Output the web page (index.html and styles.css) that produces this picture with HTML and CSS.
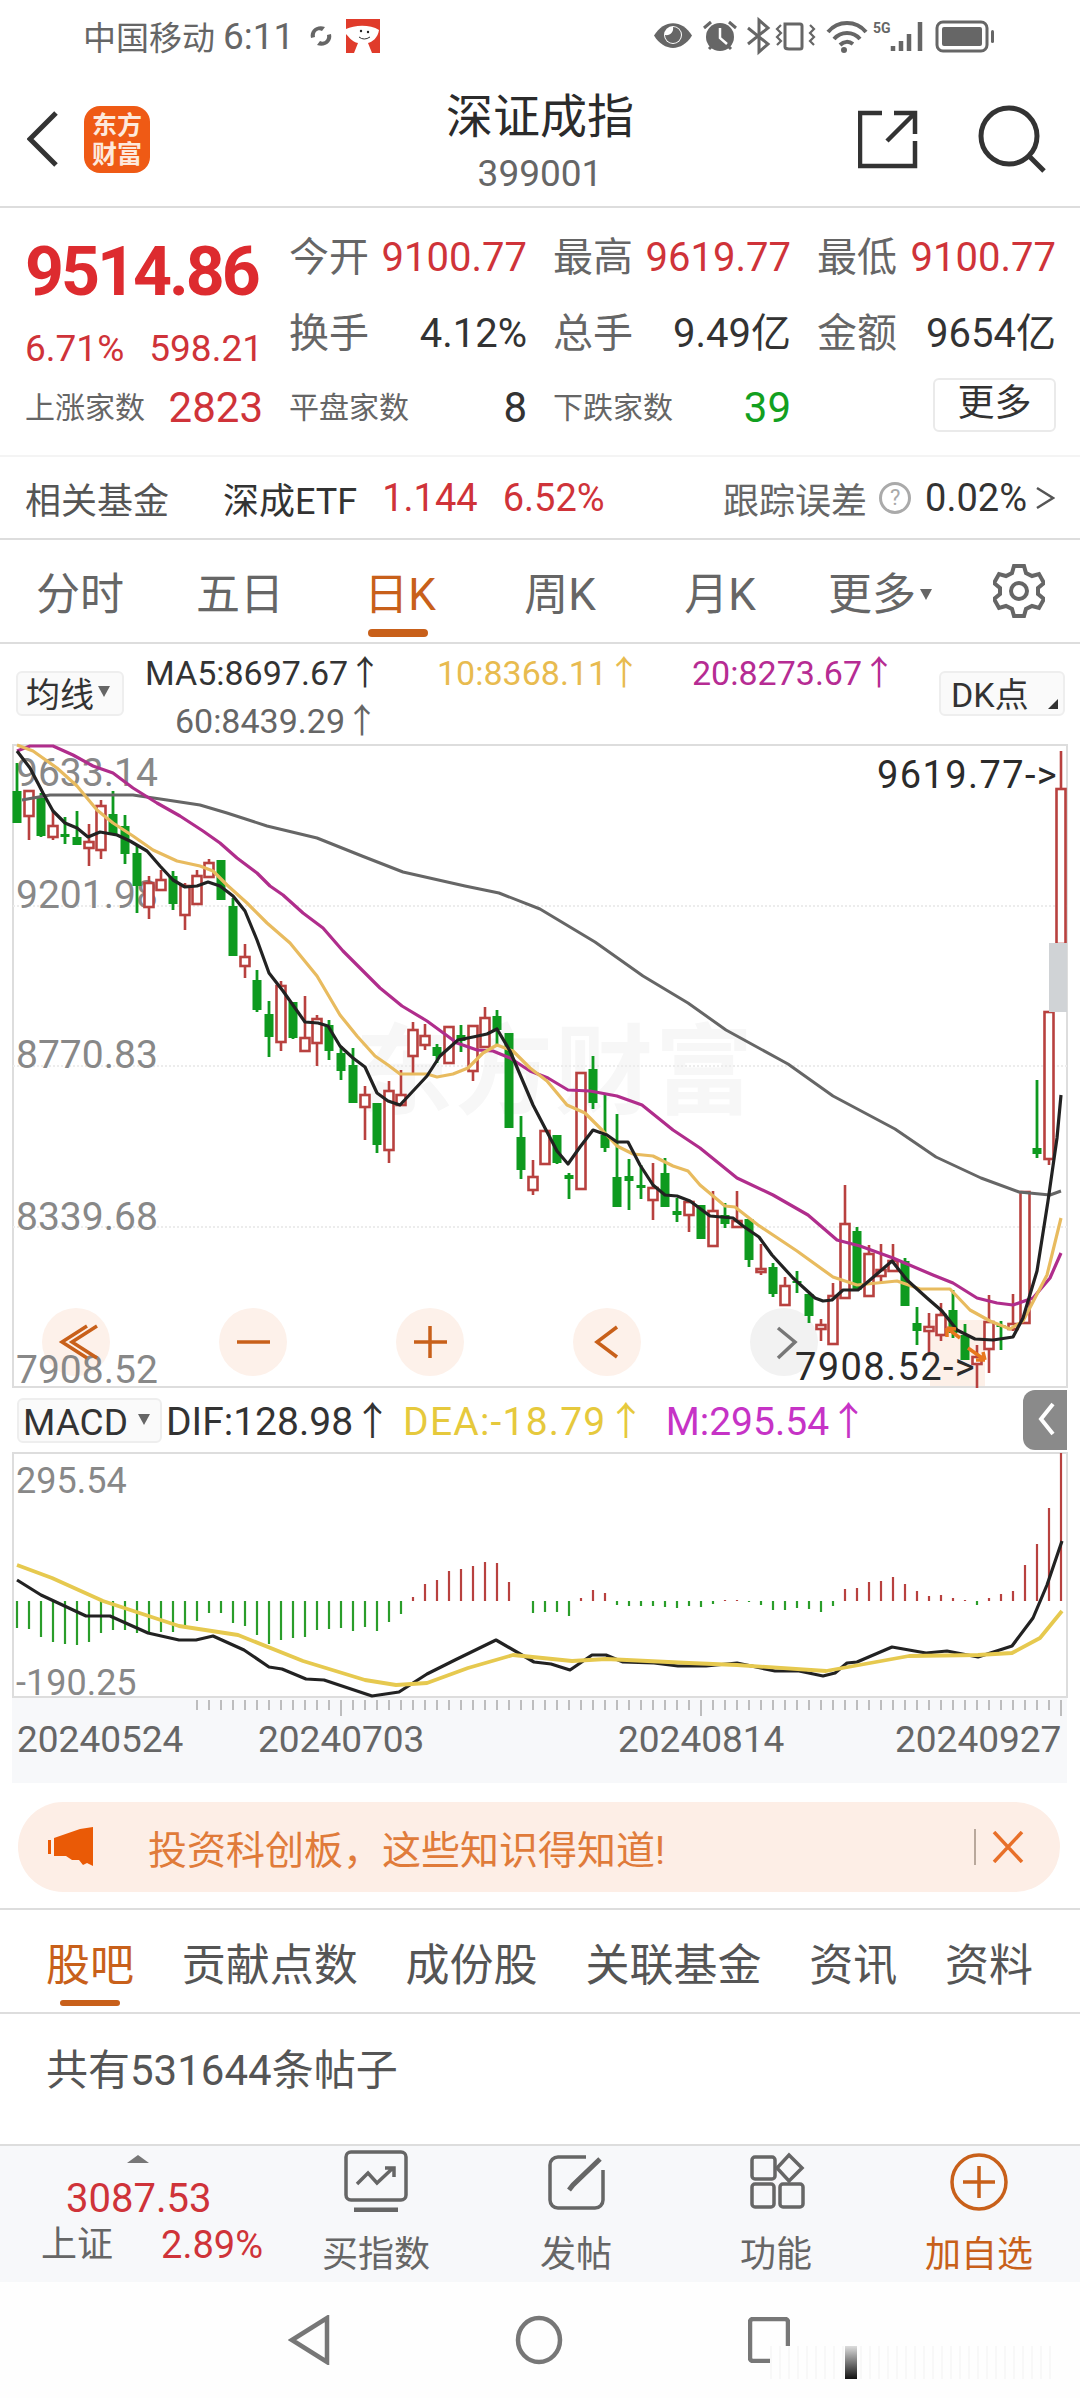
FILE: index.html
```html
<!DOCTYPE html>
<html lang="zh-CN">
  <head>
    <meta charset="UTF-8" />
    <meta name="viewport" content="width=device-width, initial-scale=1.0" />
    <title>深证成指</title>
    <link rel="stylesheet" href="styles.css">
  </head>
  <body>
    <!-- Phone status bar -->
    <div class="status">
      <span class="carrier">中国移动</span>
      <span class="clock">6:11</span>
      <svg class="loop-icon" viewBox="0 0 26 24">
        <path d="M3 14 C1 6 9 0 17 3 L14 7 C10 5 6 8 7 13 Z"/>
        <path d="M23 10 C25 18 17 24 9 21 L12 17 C16 19 20 16 19 11 Z"/>
      </svg>
      <svg class="dog-icon" viewBox="0 0 34 34">
        <rect width="34" height="34" fill="#e03b2b"/>
        <path d="M0 10 C8 6 24 5 33 11 C32 19 26 23 22 24 L26 34 H8 L12 24 C6 23 2 17 0 15 Z" fill="#fff"/>
        <circle cx="15" cy="12" r="1.2" fill="#222"/>
        <circle cx="22" cy="13" r="1.2" fill="#222"/>
        <path d="M13 18 Q18 22 24 18" stroke="#333" stroke-width="1" fill="none"/>
      </svg>
      <svg class="sys-icons" viewBox="655 15 345 42">
        <path class="si-fill" d="M658 35.5 C668 19 686 19 696 35.5 C686 52 668 52 658 35.5 Z"/>
        <circle cx="677" cy="35" r="9" fill="#fff"/>
        <path class="si-fill" d="M677 27 A8 8 0 1 1 669 35 C674 36 678 32 677 27 Z"/>
        <circle class="si-fill" cx="724" cy="37" r="14"/>
        <path d="M724 28 V38 L731 44" stroke="#fff" stroke-width="2.5" fill="none"/>
        <path class="si-line" d="M708 28 L715 22 M740 28 L733 22 M713 49 L716 46 M735 49 L732 46"/>
        <path class="si-line" d="M752 28 L772 44 L763 52 V20 L772 28 L752 44"/>
        <path class="si-line" d="M789 24 H804 A2 2 0 0 1 806 26 V47 A2 2 0 0 1 804 49 H793 A4 2 0 0 1 789 47 Z"/>
        <path class="si-thin" d="M785 25 L781 29 L785 33 L781 37 L785 41 L781 45 M814 25 L818 29 L814 33 L818 37 L814 41 L818 45"/>
        <path class="si-wide" d="M832 32 C842 20 860 20 870 32 M838 39 C845 31 857 31 864 39 M844 45 C848 41 853 41 857 44"/>
        <circle class="si-fill" cx="848" cy="50" r="3"/>
        <text class="si-5g" x="877" y="33">5G</text>
        <path class="si-bars" d="M897 46 V51 M905 41 V51 M913 34 V51 M924 22 V51"/>
        <rect class="si-line" x="941" y="22" width="50" height="29" rx="6"/>
        <rect class="si-fill" x="946" y="27" width="40" height="19" rx="2"/>
        <rect class="si-fill" x="995" y="30" width="3" height="13" rx="1.5"/>
      </svg>
    </div>

    <!-- Title bar -->
    <div class="topbar">
      <div class="topbar-left">
        <svg class="back-icon" viewBox="0 0 32 56"><path d="M29 2 L3 28 L29 54"/></svg>
        <div class="logo">东方<br>财富</div>
      </div>
      <div class="title-box">
        <div class="title">深证成指</div>
        <div class="code">399001</div>
      </div>
      <div class="topbar-right">
        <svg class="share-icon" viewBox="0 0 60 60">
          <path d="M24 4 H2 V57 H57 V32 M57 25 V4 H36 M56 5 L29 32"/>
        </svg>
        <svg class="search-icon" viewBox="0 0 68 68">
          <circle cx="31" cy="31" r="28"/>
          <path d="M51 51 L66 66"/>
        </svg>
      </div>
    </div>

    <!-- Quote block -->
    <div class="quote">
      <div class="price">9514.86</div>
      <div class="cell"><span class="lbl">今开</span><span class="up">9100.77</span></div>
      <div class="cell"><span class="lbl">最高</span><span class="up">9619.77</span></div>
      <div class="cell"><span class="lbl">最低</span><span class="up">9100.77</span></div>

      <div class="change"><span>6.71%</span><span>598.21</span></div>
      <div class="cell"><span class="lbl">换手</span><span class="dark">4.12%</span></div>
      <div class="cell"><span class="lbl">总手</span><span class="dark">9.49亿</span></div>
      <div class="cell"><span class="lbl">金额</span><span class="dark">9654亿</span></div>

      <div class="cell small"><span class="lbl">上涨家数</span><span class="up">2823</span></div>
      <div class="cell small"><span class="lbl">平盘家数</span><span class="dark">8</span></div>
      <div class="cell small"><span class="lbl">下跌家数</span><span class="down">39</span></div>
      <div class="more-wrap"><span class="more-btn">更多</span></div>
    </div>

    <div class="funds">
      <span class="fund-name">相关基金</span>
      <span class="fund-etf">深成ETF</span>
      <span class="fund-val">1.144</span>
      <span class="fund-val">6.52%</span>
      <span class="track">跟踪误差</span>
      <span class="help">?</span>
      <span class="track-val">0.02%</span>
      <svg class="track-arrow" viewBox="0 0 20 24"><path d="M2 2 L18 12 L2 22"/></svg>
    </div>

    <!-- Period tabs -->
    <div class="period-tabs">
      <span class="period">分时</span>
      <span class="period">五日</span>
      <span class="period active">日K</span>
      <span class="period">周K</span>
      <span class="period">月K</span>
      <span class="period">更多<i class="caret"></i></span>
      <svg class="gear" viewBox="0 0 52 54">
        <path d="M21 2 H31 L33 9 L39 12 L46 10 L51 19 L45 24 V30 L51 35 L46 44 L39 42 L33 45 L31 52 H21 L19 45 L13 42 L6 44 L1 35 L7 30 V24 L1 19 L6 10 L13 12 L19 9 Z"/>
        <circle cx="26" cy="27" r="8"/>
      </svg>
    </div>

    <!-- Moving average legend -->
    <div class="ma-row">
      <span class="chip ma-chip">均线<i class="caret"></i></span>
      <div class="ma-legend">
        <span class="ma5">MA5:8697.67↑</span>
        <span class="ma10">10:8368.11↑</span>
        <span class="ma20">20:8273.67↑</span>
        <span class="ma60">60:8439.29↑</span>
      </div>
      <span class="chip dk-chip">DK点<i class="corner"></i></span>
    </div>

    <!-- K line chart, drawn on page coordinates -->
    <svg class="kchart" viewBox="0 746 1080 644">
      <rect class="frame" x="13" y="747" width="1054" height="642"/>
      <text class="wm-text" x="355" y="1108">东方财富</text>
      <path class="grid" d="M13 908 H1067 M13 1068 H1067 M13 1229 H1067"/>
      <rect class="tint" x="930" y="1322" width="55" height="66"/>

      <circle class="pad" cx="76" cy="1344" r="34"/>
      <circle class="pad" cx="253" cy="1344" r="34"/>
      <circle class="pad" cx="430" cy="1344" r="34"/>
      <circle class="pad" cx="607" cy="1344" r="34"/>
      <circle class="pad-off" cx="784" cy="1344" r="34"/>

      <text class="axis" x="16" y="788">9633.14</text>
      <text class="axis" x="16" y="910">9201.98</text>
      <text class="axis" x="16" y="1070">8770.83</text>
      <text class="axis" x="16" y="1232">8339.68</text>
      <text class="axis" x="16" y="1385">7908.52</text>

      <g id="candles"></g>
      <rect class="scroll-block" x="1049" y="945" width="18" height="69"/>
      <g id="maLines"></g>

      <path class="pad-icon" d="M87 1328 L62 1344 L87 1360 M97 1328 L72 1344 L97 1360"/>
      <path class="pad-icon" d="M237 1344 H270"/>
      <path class="pad-icon" d="M414 1344 H447 M430 1328 V1360"/>
      <path class="pad-icon" d="M617 1329 L597 1344 L617 1359"/>
      <path class="pad-icon-off" d="M778 1330 L795 1344 L778 1360"/>
      <path class="low-arrow" d="M960 1340 L947 1330 M947 1330 L947 1339 M947 1330 L956 1331 M985 1362 L968 1350 M985 1362 L976 1362 M985 1362 L983 1354"/>

      <text class="mark" x="877" y="790">9619.77-&gt;</text>
      <text class="mark" x="795" y="1382">7908.52-&gt;</text>
    </svg>

    <!-- MACD legend -->
    <div class="macd-row">
      <span class="chip macd-chip">MACD<i class="caret"></i></span>
      <span class="dif">DIF:128.98↑</span>
      <span class="dea">DEA:-18.79↑</span>
      <span class="macd-m">M:295.54↑</span>
      <span class="side-tab">
        <svg viewBox="0 0 18 34"><path d="M15 2 L3 17 L15 32"/></svg>
      </span>
    </div>

    <svg class="macdchart" viewBox="0 1454 1080 246">
      <rect class="frame" x="13" y="1455" width="1054" height="244"/>
      <text class="axis small-axis" x="16" y="1495">295.54</text>
      <text class="axis small-axis" x="16" y="1697">-190.25</text>
      <g id="macdBars"></g>
      <g id="macdLines"></g>
    </svg>

    <!-- Date axis -->
    <div class="dates">
      <svg class="ticks" viewBox="0 0 1055 20"><g id="ticks"></g></svg>
      <div class="date-row">
        <span>20240524</span>
        <span class="d2">20240703</span>
        <span class="d3">20240814</span>
        <span class="d4">20240927</span>
      </div>
    </div>

    <!-- Notice -->
    <div class="notice-wrap">
      <div class="notice">
        <svg class="horn" viewBox="0 0 46 40">
          <path d="M0 13 H3 V27 H0 Z M6 11 L32 2 L45 0 V39 L39 36 L35 38 L31 33 L24 33 L18 29 H6 Z"/>
        </svg>
        <span class="notice-text">投资科创板，这些知识得知道!</span>
        <i class="notice-sep"></i>
        <svg class="notice-x" viewBox="0 0 32 32"><path d="M2 1 L30 31 M30 1 L2 31"/></svg>
      </div>
    </div>

    <!-- Content tabs -->
    <div class="sub-tabs">
      <span class="sub active">股吧</span>
      <span class="sub">贡献点数</span>
      <span class="sub">成份股</span>
      <span class="sub">关联基金</span>
      <span class="sub">资讯</span>
      <span class="sub">资料</span>
    </div>

    <div class="post-count">共有531644条帖子</div>

    <!-- Bottom tool bar -->
    <div class="toolbar">
      <div class="index-box">
        <i class="tri"></i>
        <div class="index-val">3087.53</div>
        <div class="index-line"><span>上证</span><span class="up">2.89%</span></div>
      </div>
      <div class="tool">
        <svg viewBox="0 0 80 62">
          <rect x="10" y="2" width="60" height="48" rx="5"/>
          <path d="M21 34 L32 23 L41 33 L57 18 M49 18 H58 V27"/>
          <path class="thick" d="M18 60 H62"/>
        </svg>
        <span>买指数</span>
      </div>
      <div class="tool">
        <svg viewBox="0 0 80 62">
          <path d="M50 7 H22 A8 8 0 0 0 14 15 V50 A8 8 0 0 0 22 58 H59 A8 8 0 0 0 67 50 V20"/>
          <path class="thick" d="M64 9 L37 35 L33 40"/>
        </svg>
        <span>发帖</span>
      </div>
      <div class="tool">
        <svg viewBox="0 0 80 62">
          <rect x="16" y="7" width="23" height="22" rx="3"/>
          <path d="M53 5 L66 18 L53 31 L41 18 Z"/>
          <rect x="16" y="34" width="22" height="23" rx="3"/>
          <rect x="44" y="34" width="23" height="23" rx="3"/>
        </svg>
        <span>功能</span>
      </div>
      <div class="tool add">
        <svg viewBox="0 0 80 62">
          <circle cx="43" cy="32" r="27"/>
          <path d="M27 32 H59 M43 16 V48"/>
        </svg>
        <span>加自选</span>
      </div>
    </div>

    <!-- Android nav keys -->
    <div class="navkeys">
      <svg viewBox="0 0 42 50"><path d="M39 3 V47 L4 25 Z"/></svg>
      <svg viewBox="0 0 48 50"><ellipse cx="24" cy="25" rx="21" ry="22"/></svg>
      <svg viewBox="0 0 42 46"><rect x="2" y="2" width="38" height="42" rx="3"/></svg>
      <div class="stamp"><i class="stamp-bar"></i></div>
    </div>

    <script src="script.js"></script>
  </body>
</html>
```

FILE: styles.css
```css
* {
  box-sizing: border-box;
}

body {
  margin: 0;
  width: 1080px;
  height: 2400px;
  overflow: hidden;
  background: #fff;
  color: #333;
  font-family: Roboto, "Noto Sans CJK SC", sans-serif;
}

svg {
  display: block;
  flex: none;
}

i {
  font-style: normal;
}

.up {
  color: #cf3339;
}

.down {
  color: #12a01f;
}

.dark {
  color: #333;
}

/* status bar */
.status {
  height: 72px;
  padding-left: 83px;
  display: flex;
  align-items: center;
  color: #666;
  font-size: 33px;
}

.clock {
  margin-left: 8px;
  font-size: 37px;
}

.loop-icon {
  width: 26px;
  height: 24px;
  margin-left: 14px;
  fill: #666;
}

.dog-icon {
  width: 34px;
  height: 34px;
  margin-left: 12px;
}

.sys-icons {
  width: 345px;
  height: 42px;
  margin-left: 271px;
}

.si-fill {
  fill: #666;
}

.si-line,
.si-thin,
.si-wide,
.si-bars {
  fill: none;
  stroke: #666;
}

.si-line {
  stroke-width: 3;
}

.si-thin {
  stroke-width: 2.2;
}

.si-wide {
  stroke-width: 4;
}

.si-bars {
  stroke-width: 4.5;
}

.si-5g {
  fill: #666;
  font-size: 14px;
  font-weight: 700;
}

/* title bar */
.topbar {
  height: 136px;
  display: grid;
  grid-template-columns: 1fr auto 1fr;
  border-bottom: 2px solid #ddd;
}

.topbar-left {
  display: flex;
  align-items: center;
  padding-left: 27px;
}

.back-icon {
  width: 32px;
  height: 56px;
  fill: none;
  stroke: #333;
  stroke-width: 5;
}

.logo {
  width: 66px;
  height: 67px;
  margin-left: 25px;
  padding-top: 5px;
  border-radius: 16px;
  background: #ef5a15;
  color: #fde9dc;
  font-size: 25px;
  font-weight: 700;
  line-height: 29px;
  text-align: center;
}

.title-box {
  text-align: center;
}

.title {
  margin-top: 14px;
  font-size: 47px;
  line-height: 62px;
  color: #2b2b2b;
}

.code {
  margin-top: 6px;
  font-size: 37px;
  line-height: 40px;
  color: #666;
}

.topbar-right {
  display: flex;
  justify-content: flex-end;
  align-items: center;
  padding-right: 34px;
}

.share-icon {
  width: 60px;
  height: 60px;
  fill: none;
  stroke: #333;
  stroke-width: 4.5;
}

.search-icon {
  width: 68px;
  height: 68px;
  margin-left: 60px;
  fill: none;
  stroke: #333;
  stroke-width: 5;
}

/* quote block */
.quote {
  padding: 12px 25px 0;
  height: 249px;
  display: grid;
  grid-template-columns: 238px 238px 238px 239px;
  grid-template-rows: 76px 76px 72px;
  column-gap: 26px;
  align-items: center;
  font-size: 40px;
  border-bottom: 2px solid #f4f4f4;
}

.price {
  padding-top: 28px;
  color: #dd2b2f;
  font-size: 68px;
  font-weight: 700;
  line-height: 48px;
  letter-spacing: -3px;
  white-space: nowrap;
}

.change {
  padding-top: 30px;
  display: flex;
  justify-content: space-between;
  color: #cf3339;
  font-size: 37px;
  line-height: 46px;
}

.cell {
  display: flex;
  justify-content: space-between;
  align-items: center;
  line-height: 50px;
}

.lbl {
  color: #666;
}

.cell.small {
  font-size: 42px;
}

.cell.small .lbl {
  font-size: 30px;
}

.more-wrap {
  display: flex;
  justify-content: flex-end;
}

.more-btn {
  width: 123px;
  height: 54px;
  margin-top: -6px;
  border: 2px solid #eaeaea;
  border-radius: 6px;
  color: #333;
  font-size: 37px;
  line-height: 48px;
  text-align: center;
}

/* related fund row */
.funds {
  height: 83px;
  padding: 0 25px;
  display: flex;
  align-items: center;
  font-size: 36px;
  border-bottom: 2px solid #ddd;
  color: #555;
}

.fund-etf {
  margin-left: 54px;
  color: #333;
}

.fund-val {
  margin-left: 25px;
  color: #cf3339;
  font-size: 38px;
}

.track {
  margin-left: auto;
  color: #666;
}

.help {
  width: 32px;
  height: 32px;
  margin-left: 12px;
  border: 3px solid #aaa;
  border-radius: 50%;
  color: #aaa;
  font-size: 22px;
  line-height: 26px;
  text-align: center;
}

.track-val {
  margin-left: 14px;
  color: #333;
  font-size: 38px;
}

.track-arrow {
  width: 20px;
  height: 24px;
  margin-left: 8px;
  fill: none;
  stroke: #555;
  stroke-width: 2.5;
}

/* period tabs */
.period-tabs {
  height: 104px;
  padding-top: 8px;
  display: flex;
  align-items: center;
  border-bottom: 2px solid #ddd;
}

.period {
  position: relative;
  width: 160px;
  text-align: center;
  color: #666;
  font-size: 44px;
  line-height: 60px;
}

.period.active {
  color: #c8601a;
}

.period.active::after {
  content: "";
  position: absolute;
  left: 48px;
  bottom: -12px;
  width: 60px;
  height: 8px;
  border-radius: 4px;
  background: #c8601a;
}

.caret {
  display: inline-block;
  margin-left: 4px;
  vertical-align: 10px;
  border-left: 6px solid transparent;
  border-right: 6px solid transparent;
  border-top: 11px solid #666;
}

.gear {
  width: 52px;
  height: 54px;
  margin: -8px 0 0 33px;
  fill: none;
  stroke: #666;
  stroke-width: 4;
}

/* legends */
.chip {
  height: 45px;
  border: 2px solid #eee;
  border-radius: 6px;
  background: #fafafa;
  color: #333;
  line-height: 44px;
  white-space: nowrap;
}

.ma-row {
  height: 100px;
  padding-left: 16px;
  display: flex;
  font-size: 34px;
}

.ma-chip {
  width: 108px;
  margin-top: 27px;
  padding-left: 8px;
  font-size: 34px;
}

.ma-legend {
  width: 794px;
  margin-left: 21px;
  padding-top: 2px;
  display: grid;
  grid-template-columns: 234px 197px 197px;
  grid-template-rows: 48px 48px;
  column-gap: 58px;
  align-items: center;
}

.ma5 {
  color: #333;
}

.ma10 {
  color: #e8bb4f;
}

.ma20 {
  color: #b62c93;
}

.ma60 {
  grid-column: 1;
  grid-row: 2;
  justify-self: end;
  color: #666;
}

.dk-chip {
  position: relative;
  width: 126px;
  margin-top: 27px;
  padding-left: 10px;
}

.corner {
  position: absolute;
  right: 5px;
  bottom: 5px;
  border-left: 10px solid transparent;
  border-bottom: 10px solid #333;
}

/* charts */
.kchart {
  width: 1080px;
  height: 644px;
  overflow: visible;
}

.frame {
  fill: none;
  stroke: #ddd;
  stroke-width: 2;
}

.grid {
  fill: none;
  stroke: #ececec;
  stroke-width: 2;
  stroke-dasharray: 2 2;
}

.wm-text {
  fill: #f7f7f7;
  font-size: 98px;
  font-weight: 700;
  letter-spacing: 2px;
}

.tint {
  fill: #fdf0e8;
}

.axis {
  fill: #888;
  font-size: 39px;
}

.small-axis {
  font-size: 36px;
}

.pad {
  fill: #fdf1ea;
}

.pad-off {
  fill: #f2f2f2;
}

.pad-icon,
.pad-icon-off,
.low-arrow {
  fill: none;
  stroke-width: 3.5;
}

.pad-icon {
  stroke: #c8601a;
}

.pad-icon-off {
  stroke: #777;
}

.low-arrow {
  stroke: #e8781e;
}

.scroll-block {
  fill: #d0d3d6;
}

.mark {
  fill: #2b2b2b;
  font-size: 38px;
  letter-spacing: 1.4px;
}

.macd-row {
  position: relative;
  height: 64px;
  padding-left: 17px;
  display: flex;
  align-items: flex-start;
  font-size: 39px;
  line-height: 68px;
  white-space: nowrap;
}

.macd-chip {
  width: 145px;
  margin-top: 10px;
  padding-left: 4px;
  font-size: 37px;
  line-height: 45px;
}

.macd-chip .caret {
  margin-left: 10px;
}

.dif {
  margin-left: 4px;
  color: #333;
}

.dea {
  margin-left: 11px;
  color: #e6c93c;
  letter-spacing: 1.2px;
}

.macd-m {
  margin-left: 19px;
  color: #c633c6;
}

.side-tab {
  position: absolute;
  left: 1023px;
  top: 2px;
  width: 44px;
  height: 60px;
  padding: 12px 0 0 15px;
  border-radius: 12px 0 0 12px;
  background: #8a8a8a;
}

.side-tab svg {
  width: 18px;
  height: 34px;
  fill: none;
  stroke: #fff;
  stroke-width: 4;
}

.macdchart {
  width: 1080px;
  height: 246px;
  overflow: visible;
}

.dates {
  width: 1055px;
  height: 85px;
  margin-left: 12px;
  background: #f7f8fa;
}

.ticks {
  width: 1055px;
  height: 20px;
  stroke: #aaa;
  stroke-width: 1.5;
}

.date-row {
  position: relative;
  height: 44px;
  padding-left: 5px;
  color: #666;
  font-size: 37px;
  line-height: 44px;
}

.date-row .d2,
.date-row .d3,
.date-row .d4 {
  position: absolute;
  top: 0;
}

.d2 {
  left: 246px;
}

.d3 {
  left: 606px;
}

.d4 {
  left: 883px;
}

/* notice */
.notice-wrap {
  height: 127px;
  padding: 19px 20px 0 18px;
  border-bottom: 2px solid #ddd;
}

.notice {
  height: 90px;
  padding: 0 36px 0 30px;
  display: flex;
  align-items: center;
  border-radius: 45px;
  background: #fdeee6;
  color: #e07b3a;
  font-size: 39px;
}

.horn {
  width: 46px;
  height: 40px;
  fill: #ea5a06;
}

.notice-text {
  margin-left: 54px;
}

.notice-sep {
  width: 2px;
  height: 36px;
  margin-left: auto;
  background: #b9a89c;
}

.notice-x {
  width: 32px;
  height: 32px;
  margin-left: 16px;
  fill: none;
  stroke: #e8702a;
  stroke-width: 3.5;
}

/* content tabs */
.sub-tabs {
  height: 104px;
  padding: 10px 47px 0 46px;
  display: flex;
  justify-content: space-between;
  align-items: center;
  border-bottom: 2px solid #ddd;
  color: #555;
  font-size: 44px;
}

.sub {
  position: relative;
  line-height: 60px;
}

.sub.active {
  color: #c8601a;
}

.sub.active::after {
  content: "";
  position: absolute;
  left: 14px;
  bottom: -10px;
  width: 60px;
  height: 6px;
  border-radius: 3px;
  background: #c8601a;
}

.post-count {
  height: 132px;
  padding: 32px 0 0 46px;
  border-bottom: 2px solid #ddd;
  color: #555;
  font-size: 42px;
  line-height: 50px;
}

/* bottom tool bar */
.toolbar {
  height: 136px;
  display: flex;
  background: #f7f8fa;
}

.index-box {
  position: relative;
  width: 276px;
  padding: 31px 13px 0 41px;
}

.tri {
  position: absolute;
  left: 127px;
  top: 9px;
  border-left: 11px solid transparent;
  border-right: 11px solid transparent;
  border-bottom: 8px solid #777;
}

.index-val {
  padding-left: 25px;
  color: #cf3339;
  font-size: 40px;
  line-height: 44px;
}

.index-line {
  margin-top: 2px;
  display: flex;
  justify-content: space-between;
  align-items: center;
  color: #666;
  font-size: 36px;
  line-height: 44px;
}

.index-line .up {
  font-size: 38px;
}

.tool {
  width: 200px;
  padding-top: 4px;
  display: flex;
  flex-direction: column;
  align-items: center;
  color: #666;
  font-size: 36px;
}

.tool svg {
  width: 80px;
  height: 62px;
  fill: none;
  stroke: #666;
  stroke-width: 3.5;
}

.tool .thick {
  stroke-width: 5;
}

.tool span {
  margin-top: 21px;
  line-height: 44px;
}

.tool.add {
  color: #c8601a;
}

.tool.add svg {
  stroke: #c8601a;
}

.tool.add span {
  margin-left: 6px;
}

/* nav keys */
.navkeys {
  position: relative;
  height: 116px;
  padding-left: 288px;
  display: flex;
  align-items: center;
  gap: 185px;
  background: #fefefe;
}

.navkeys svg {
  fill: none;
  stroke: #777;
  stroke-width: 4.5;
}

.navkeys svg:nth-child(1) {
  width: 42px;
  height: 50px;
}

.navkeys svg:nth-child(2) {
  width: 48px;
  height: 50px;
}

.navkeys svg:nth-child(3) {
  width: 42px;
  height: 46px;
}

.stamp {
  position: absolute;
  left: 770px;
  top: 64px;
  width: 285px;
  height: 33px;
  background: repeating-linear-gradient(90deg, #f8f8f8 0 2px, #fefefe 2px 9px);
}

.stamp-bar {
  position: absolute;
  left: 75px;
  top: 0;
  width: 12px;
  height: 33px;
  background: linear-gradient(#ddd, #111);
}
```

FILE: script.js
```js
// Draws the chart data into the svg groups

const NS = "http://www.w3.org/2000/svg";
const X0 = 17;
const STEP = 12;
const RED = "#b8413f";
const GREEN = "#0e9a1f";

// [up, high, top, bottom, low] in page pixels, one per day
const candles = [
  [0,765,793,825,825],[1,793,793,818,842],[0,795,800,838,839],[1,813,828,839,842],
  [0,819,836,839,846],[0,813,839,847,847],[1,826,844,850,868],[1,802,808,852,861],
  [0,793,816,836,836],[0,817,828,856,866],[0,847,855,888,915],[1,878,885,909,921],
  [1,872,882,892,892],[0,873,878,906,912],[1,885,888,917,932],[1,872,878,906,907],
  [1,861,865,879,879],[0,862,862,902,902],[0,900,908,958,958],[1,946,959,968,980],
  [0,972,982,1012,1014],[0,1003,1016,1039,1059],[1,983,988,1044,1053],[0,1004,1004,1040,1041],
  [1,998,1040,1053,1053],[1,1017,1021,1045,1068],[0,1022,1027,1053,1062],[0,1048,1055,1073,1082],
  [0,1050,1067,1105,1105],[1,1088,1097,1109,1142],[0,1105,1105,1147,1155],[1,1083,1093,1152,1165],
  [1,1072,1097,1107,1107],[1,1024,1032,1058,1077],[1,1026,1038,1047,1052],[0,1046,1049,1058,1065],
  [1,1029,1029,1065,1065],[0,1027,1037,1043,1054],[1,1028,1028,1073,1083],[1,1009,1020,1049,1049],
  [0,1012,1018,1032,1047],[0,1035,1035,1130,1130],[0,1118,1139,1172,1181],[1,1162,1179,1192,1197],
  [1,1133,1133,1166,1166],[0,1137,1137,1165,1166],[0,1175,1177,1181,1201],[1,1075,1075,1191,1191],
  [0,1058,1071,1105,1111],[0,1097,1137,1150,1154],[0,1116,1179,1209,1209],[0,1161,1178,1183,1212],
  [0,1167,1187,1190,1201],[1,1165,1190,1202,1222],[0,1160,1175,1209,1209],[0,1200,1213,1217,1224],
  [1,1204,1204,1217,1234],[0,1207,1207,1241,1241],[1,1193,1213,1248,1248],[0,1205,1217,1226,1230],
  [1,1193,1223,1229,1229],[0,1221,1221,1262,1269],[1,1246,1271,1274,1277],[0,1265,1269,1296,1299],
  [1,1279,1288,1307,1307],[0,1273,1283,1285,1295],[0,1296,1296,1318,1325],[1,1321,1327,1331,1343],
  [1,1285,1298,1346,1346],[1,1187,1226,1300,1300],[0,1229,1233,1292,1292],[1,1247,1256,1298,1298],
  [1,1246,1272,1278,1285],[1,1246,1263,1273,1273],[0,1260,1263,1308,1308],[0,1309,1325,1333,1347],
  [1,1315,1329,1333,1357],[1,1305,1317,1337,1343],[0,1292,1312,1335,1340],[0,1326,1337,1362,1362],
  [1,1347,1359,1366,1390],[1,1297,1324,1351,1375],[0,1323,1327,1329,1352],[1,1296,1326,1331,1333],
  [1,1194,1194,1325,1325],[0,1082,1150,1156,1160],[1,1014,1014,1161,1167],[1,753,791,946,946]
];

const ma5 = "17,753 30,770 43,795 53,813 65,825 77,830 88,839 100,834 117,837 130,843 147,853 160,868 173,882 185,889 197,888 208,884 220,888 233,898 245,913 257,942 269,975 283,993 295,1010 305,1024 318,1025 328,1028 340,1048 353,1060 365,1069 377,1095 388,1103 400,1107 427,1078 440,1058 458,1042 473,1039 487,1036 497,1031 510,1053 533,1107 545,1130 557,1153 568,1166 580,1149 593,1132 607,1137 617,1144 628,1144 640,1167 653,1187 665,1197 677,1198 690,1203 710,1218 733,1220 743,1228 759,1239 772,1257 793,1280 815,1300 823,1303 832,1302 843,1292 858,1292 870,1282 892,1263 907,1282 927,1300 942,1313 957,1332 975,1341 993,1342 1013,1339 1023,1320 1037,1273 1048,1203 1057,1140 1061,1097";
const ma10 = "17,747 33,753 57,770 77,788 97,812 113,825 133,838 153,852 177,863 200,868 213,873 227,887 247,905 267,925 290,945 317,978 340,1017 357,1038 375,1058 388,1067 400,1076 427,1076 437,1079 453,1076 468,1070 483,1055 497,1047 513,1053 530,1070 547,1083 567,1107 585,1115 603,1133 617,1148 633,1156 653,1158 673,1168 688,1173 700,1187 725,1208 735,1209 758,1227 797,1253 833,1279 857,1287 877,1285 897,1283 920,1291 950,1291 970,1312 990,1323 1010,1331 1023,1323 1047,1277 1061,1220";
const ma20 = "17,753 30,748 53,748 73,757 93,768 113,775 133,790 157,805 180,818 203,833 220,845 237,860 257,875 270,888 283,897 303,915 323,930 343,953 360,970 380,990 402,1008 427,1023 457,1045 477,1052 493,1053 510,1060 530,1073 548,1080 568,1092 590,1093 617,1098 642,1107 673,1132 700,1150 737,1180 773,1197 808,1217 837,1242 860,1248 893,1260 933,1277 953,1285 977,1300 997,1305 1013,1307 1033,1300 1050,1280 1061,1255";
const ma60 = "22,802 50,797 93,797 133,797 167,802 200,807 227,815 267,828 317,840 362,858 403,874 465,888 499,895 540,911 595,944 643,978 688,1005 726,1032 788,1066 833,1098 895,1131 936,1159 981,1180 1019,1194 1050,1197 1061,1193";

// positive = red bar above zero, negative = green bar below
const macd = [
  -27,-28,-36,-41,-43,-44,-41,-32,-29,-29,-32,-32,-31,-31,-27,-20,-12,-12,-22,-25,-34,-43,-39,-37,-36,-29,-28,-27,-30,-26,-30,-21,-13,
  4,17,21,30,32,35,39,38,19,0,-12,-11,-11,-15,3,11,8,
  -4,-5,-5,-5,-6,-7,-5,-6,-3,1,1,-1,-4,-9,-9,-7,-8,-11,-5,
  12,13,19,20,24,17,10,5,6,3,1,-4,3,7,10,36,57,93,148
];

const dif = "17,1582 41,1597 86,1618 110,1618 148,1635 179,1642 196,1642 213,1638 244,1652 269,1669 282,1671 306,1681 324,1682 372,1698 399,1694 427,1676 455,1662 496,1642 534,1664 551,1666 570,1672 592,1657 606,1657 623,1664 654,1665 678,1668 706,1668 737,1665 775,1673 799,1673 823,1678 835,1675 847,1665 857,1664 892,1649 926,1655 947,1653 978,1659 1012,1648 1033,1620 1047,1587 1062,1543";
const dea = "17,1567 52,1580 103,1603 179,1628 238,1637 303,1663 365,1682 396,1687 427,1685 468,1670 513,1657 572,1663 606,1661 689,1665 737,1667 826,1673 909,1658 978,1657 1012,1655 1040,1640 1062,1613";

function el(parent, tag, attrs) {
  const node = document.createElementNS(NS, tag);
  Object.keys(attrs).forEach((k) => node.setAttribute(k, attrs[k]));
  parent.appendChild(node);
  return node;
}

function drawCandles() {
  const g = document.getElementById("candles");
  candles.forEach((c, i) => {
    const x = X0 + STEP * i;
    const color = c[0] ? RED : GREEN;
    const w = c[0] ? 2.6 : 2.8;
    if (c[1] < c[2]) el(g, "line", { x1: x, x2: x, y1: c[1], y2: c[2], stroke: color, "stroke-width": w });
    if (c[4] > c[3]) el(g, "line", { x1: x, x2: x, y1: c[3], y2: c[4], stroke: color, "stroke-width": w });
    if (c[0]) {
      el(g, "rect", { x: x - 4.5, y: c[2], width: 9, height: c[3] - c[2], fill: "#fff", stroke: color, "stroke-width": 2.6 });
    } else {
      el(g, "rect", { x: x - 4.5, y: c[2], width: 9, height: c[3] - c[2], fill: color });
    }
  });
}

function drawLine(g, points, color, width) {
  el(g, "polyline", { points: points, fill: "none", stroke: color, "stroke-width": width, "stroke-linejoin": "round" });
}

function drawMacd() {
  const g = document.getElementById("macdBars");
  const zero = 1603;
  macd.forEach((v, i) => {
    if (v === 0) return;
    const x = X0 + STEP * i;
    el(g, "line", { x1: x, x2: x, y1: zero, y2: zero - v, stroke: v > 0 ? "#b8413f" : "#2a9d2a", "stroke-width": 2.2 });
  });
}

function drawTicks() {
  const g = document.getElementById("ticks");
  for (let x = 185; x <= 1050; x += 12) {
    const major = x === 329 || x === 689 || x === 1049;
    el(g, "line", { x1: x, x2: x, y1: 2, y2: major ? 18 : 12 });
  }
}

drawCandles();

const maLines = document.getElementById("maLines");
drawLine(maLines, ma60, "#666", 3);
drawLine(maLines, ma20, "#b02d8c", 3.2);
drawLine(maLines, ma10, "#e8bb5f", 3.2);
drawLine(maLines, ma5, "#222", 3.2);

drawMacd();

const macdLines = document.getElementById("macdLines");
drawLine(macdLines, dif, "#222", 3.2);
drawLine(macdLines, dea, "#e6c94f", 3.8);

drawTicks();
```
